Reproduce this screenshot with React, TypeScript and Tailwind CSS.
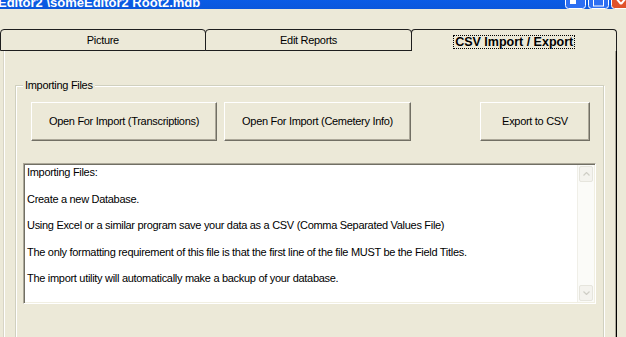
const lines = [
  "Importing Files:",
  "Create a new Database.",
  "Using Excel or a similar program save your data as a CSV (Comma Separated Values File)",
  "The only formatting requirement of this file is that the first line of the file MUST be the Field Titles.",
  "The import utility will automatically make a backup of your database.",
];

const WinButtons = () => (
  <div className="ml-auto mr-[-6px] flex gap-[2px]">
    <svg width="21" height="9" viewBox="0 0 21 9">
      <rect x="0.5" y="-4" width="20" height="12.5" rx="3" fill="#2d6ff2" stroke="#fff" />
      <rect x="5" y="0" width="6" height="4" fill="#fff" />
    </svg>
    <svg width="21" height="9" viewBox="0 0 21 9">
      <rect x="0.5" y="-4" width="20" height="12.5" rx="3" fill="#2d6ff2" stroke="#fff" />
      <rect x="5.5" y="-2" width="10" height="8" fill="none" stroke="#fff" />
    </svg>
    <svg width="21" height="9" viewBox="0 0 21 9">
      <rect x="0.5" y="-4" width="20" height="12.5" rx="3" fill="#e0522a" stroke="#fff" />
      <path d="M5 -2 L10 4 M15 -2 L10 4" stroke="#fff" strokeWidth="2" />
    </svg>
  </div>
);

const Button = ({ label, w }: { label: string; w: string }) => (
  <button
    className={`${w} h-[39px] flex items-center justify-center bg-[#ece9d8] border border-t-white border-l-white border-r-[#716f64] border-b-[#716f64] shadow-[inset_-1px_-1px_0_#aca899]`}
  >
    {label}
  </button>
);

export default function App() {
  return (
    <div className="w-[626px] h-[337px] overflow-hidden bg-[#ece9d8] font-['Liberation_Sans',Arial,sans-serif] text-[11px] tracking-[-0.3px] text-black">
      {/* title bar, mostly scrolled off */}
      <div className="h-[9px] overflow-hidden flex items-end bg-gradient-to-b from-[#0a5ce6] to-[#0b57dc]">
        <span className="ml-[-2px] text-white font-bold text-[13px] leading-[13px] tracking-normal whitespace-nowrap">
          Editor2 \someEditor2 Root2.mdb
        </span>
        <WinButtons />
      </div>

      {/* tabs */}
      <div className="mt-[20px] flex h-[22px] w-[617px]">
        <div className="w-[206px] h-full flex items-center justify-center pt-[1px] border border-[#1e1e1e] rounded-t-[4px]">
          Picture
        </div>
        <div className="-ml-px w-[208px] h-full flex items-center justify-center pt-[1px] border border-[#1e1e1e] rounded-t-[4px]">
          Edit Reports
        </div>
        <div className="-ml-px w-[206px] h-full flex items-center justify-center pt-[3px] border border-b-0 border-[#1e1e1e] rounded-t-[4px]">
          <span className="font-bold text-[12.5px] leading-[12px] tracking-normal border border-dotted border-black px-px">
            CSV Import / Export
          </span>
        </div>
      </div>

      {/* tab panel */}
      <div className="ml-[3px] w-[614px] h-[300px] border-l border-l-[#d8d5c6] border-r border-r-black shadow-[inset_-1px_0_0_#aca899,inset_1px_0_0_#fff] pt-[34px]">
        <div className="relative ml-[11px] w-[589px] h-[300px] border border-[#d0d0bf] shadow-[inset_1px_1px_0_#fff,1px_1px_0_#fff] pt-[16px] pl-[15px] pr-[13px]">
          <span className="absolute left-[7px] top-[-8px] px-[2px] bg-[#ece9d8] leading-[14px]">
            Importing Files
          </span>

          <div className="flex">
            <Button label="Open For Import (Transcriptions)" w="w-[186px]" />
            <div className="ml-[7px]">
              <Button label="Open For Import (Cemetery Info)" w="w-[187px]" />
            </div>
            <div className="ml-auto">
              <Button label="Export to CSV" w="w-[110px]" />
            </div>
          </div>

          <div className="mt-[22px] ml-[-8px] w-[573px] h-[141px] flex bg-white border border-t-[#aca899] border-l-[#aca899] border-r-white border-b-white shadow-[inset_1px_1px_0_#716f64,inset_-1px_-1px_0_#f1efe2] p-px">
            <div className="flex-1 pl-[2px] pt-px whitespace-nowrap overflow-hidden">
              {lines.map((l) => (
                <p key={l} className="leading-[13px] mb-[13.5px]">
                  {l}
                </p>
              ))}
            </div>
            <div className="w-[17px] flex flex-col bg-[#fbfbf8] border-l border-[#f0efe8]">
              <div className="h-[16px] mt-[1px] mx-px flex items-center justify-center rounded-[2px] bg-[#f4f3ee] border border-[#e6e5dd]">
                <svg width="7" height="4" viewBox="0 0 7 4">
                  <path d="M0.5 3.5 L3.5 0.5 L6.5 3.5" fill="none" stroke="#cfcec6" strokeWidth="1.2" />
                </svg>
              </div>
              <div className="flex-1" />
              <div className="h-[16px] mb-[1px] mx-px flex items-center justify-center rounded-[2px] bg-[#f4f3ee] border border-[#e6e5dd]">
                <svg width="7" height="4" viewBox="0 0 7 4">
                  <path d="M0.5 0.5 L3.5 3.5 L6.5 0.5" fill="none" stroke="#cfcec6" strokeWidth="1.2" />
                </svg>
              </div>
            </div>
          </div>
        </div>
      </div>
    </div>
  );
}
